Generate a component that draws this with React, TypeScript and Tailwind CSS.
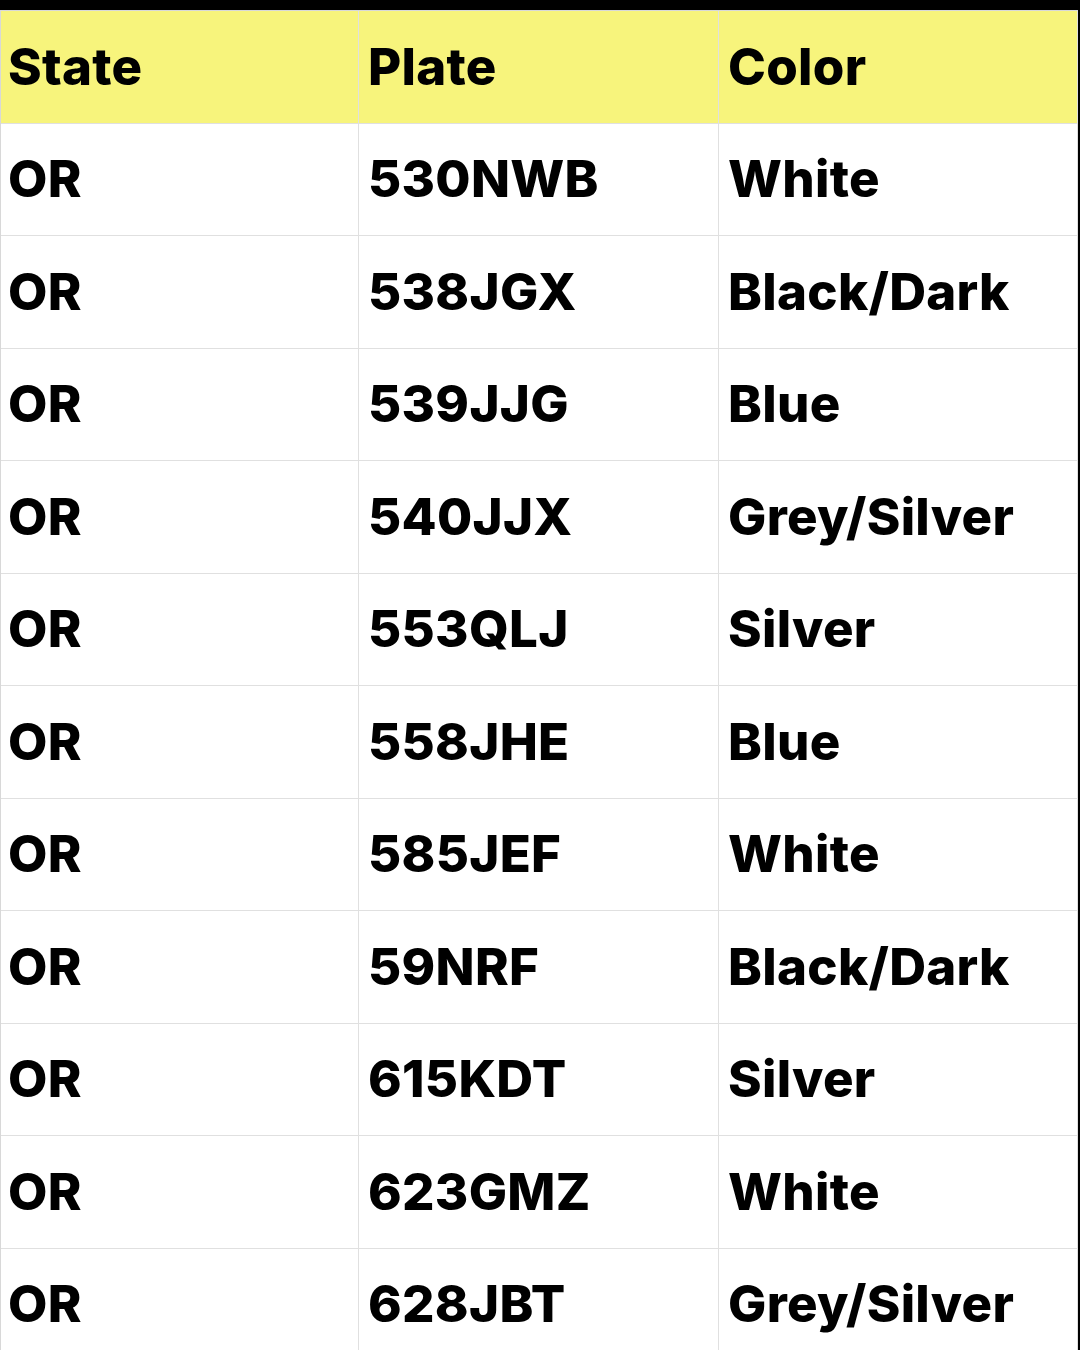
const rows: [string, string, string][] = [
  ["OR", "530NWB", "White"],
  ["OR", "538JGX", "Black/Dark"],
  ["OR", "539JJG", "Blue"],
  ["OR", "540JJX", "Grey/Silver"],
  ["OR", "553QLJ", "Silver"],
  ["OR", "558JHE", "Blue"],
  ["OR", "585JEF", "White"],
  ["OR", "59NRF", "Black/Dark"],
  ["OR", "615KDT", "Silver"],
  ["OR", "623GMZ", "White"],
  ["OR", "628JBT", "Grey/Silver"],
];

function Cell({ children, first }: { children: React.ReactNode; first?: boolean }) {
  return (
    <div
      className={`h-[112.5px] flex items-center border-r border-b border-[#e0e0e0] ${
        first ? "pl-[7px]" : "pl-[9px]"
      }`}
    >
      {children}
    </div>
  );
}

export default function App() {
  return (
    <div className="min-h-screen bg-black pt-[10px] overflow-hidden">
      <div
        className="w-[1078px] bg-white border-l border-t border-[#d8d8d8] text-black font-extrabold text-[51px] tracking-[0.3px]"
        style={{ fontFamily: "Inter, 'Noto Sans', sans-serif" }}
      >
        <div className="grid grid-cols-[358px_360px_359px] bg-[#f7f47c]">
          <Cell first>State</Cell>
          <Cell>Plate</Cell>
          <Cell>Color</Cell>
        </div>
        {rows.map((r, i) => (
          <div key={i} className="grid grid-cols-[358px_360px_359px]">
            <Cell first>{r[0]}</Cell>
            <Cell>{r[1]}</Cell>
            <Cell>{r[2]}</Cell>
          </div>
        ))}
      </div>
    </div>
  );
}
